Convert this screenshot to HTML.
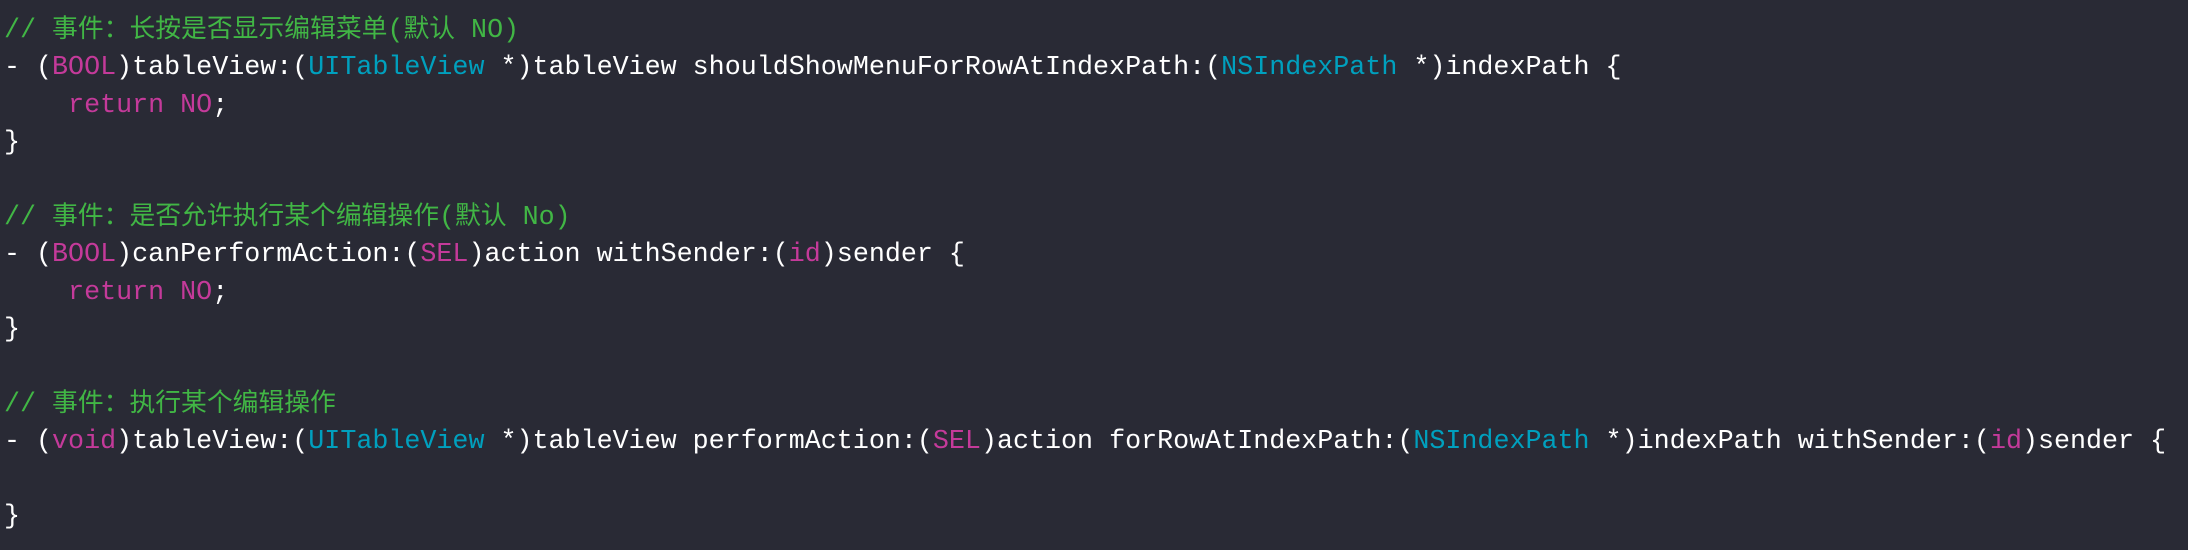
<!DOCTYPE html>
<html><head><meta charset="utf-8"><style>
html,body{margin:0;padding:0;background:#292a35;}
body{width:2188px;height:550px;overflow:hidden;}
.c{padding:12.8px 0 0 4px;font-family:"Liberation Mono",monospace;font-size:26.7px;color:#fff;}
.l{height:37.4px;line-height:37.4px;white-space:pre;overflow:hidden;}
.g{color:#41b645}.p{color:#c43a9a}.b{color:#00a0be}
.z{font-family:"Noto Sans CJK SC",sans-serif;font-size:25.8px;line-height:0;}
</style></head><body><div class="c">
<div class="l g">// <span class="z">事件：长按是否显示编辑菜单</span>(<span class="z">默认</span> NO)</div>
<div class="l">- (<span class="p">BOOL</span>)tableView:(<span class="b">UITableView</span> *)tableView shouldShowMenuForRowAtIndexPath:(<span class="b">NSIndexPath</span> *)indexPath {</div>
<div class="l">    <span class="p">return</span> <span class="p">NO</span>;</div>
<div class="l">}</div>
<div class="l"> </div>
<div class="l g">// <span class="z">事件：是否允许执行某个编辑操作</span>(<span class="z">默认</span> No)</div>
<div class="l">- (<span class="p">BOOL</span>)canPerformAction:(<span class="p">SEL</span>)action withSender:(<span class="p">id</span>)sender {</div>
<div class="l">    <span class="p">return</span> <span class="p">NO</span>;</div>
<div class="l">}</div>
<div class="l"> </div>
<div class="l g">// <span class="z">事件：执行某个编辑操作</span></div>
<div class="l">- (<span class="p">void</span>)tableView:(<span class="b">UITableView</span> *)tableView performAction:(<span class="p">SEL</span>)action forRowAtIndexPath:(<span class="b">NSIndexPath</span> *)indexPath withSender:(<span class="p">id</span>)sender {</div>
<div class="l"> </div>
<div class="l">}</div>
</div></body></html>
